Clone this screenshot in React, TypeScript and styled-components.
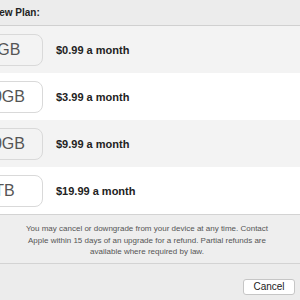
import React from "react";
import styled, { createGlobalStyle } from "styled-components";

const Global = createGlobalStyle`
  html, body { margin: 0; padding: 0; overflow: hidden; }
  body { font-family: "Liberation Sans", Arial, sans-serif; background: #ececec; }
`;

const Frame = styled.div`
  width: 300px;
  height: 300px;
  overflow: hidden;
  background: #ececec;
`;

const Sheet = styled.div`
  width: 360px;
  margin-left: -60px;
  display: flex;
  flex-direction: column;
`;

const Header = styled.div`
  height: 25px;
  display: flex;
  align-items: center;
  padding-left: 52px;
  border-bottom: 1px solid #d0d0d0;
  background: #ececec;
  font-size: 10px;
  font-weight: bold;
  color: #222;
`;

const Row = styled.div<{ $alt: boolean }>`
  height: 47px;
  display: flex;
  align-items: center;
  gap: 13px;
  padding-left: 17px;
  background: ${(p) => (p.$alt ? "#ffffff" : "#f3f3f3")};
`;

const SizeBox = styled.div`
  box-sizing: border-box;
  width: 86px;
  height: 32px;
  border: 1px solid #d9d9d9;
  border-radius: 8px;
  display: flex;
  align-items: center;
  justify-content: center;
  font-size: 16px;
  color: #555;
`;

const Price = styled.div`
  font-size: 11px;
  font-weight: bold;
  color: #222;
`;

const Footer = styled.div`
  height: 50px;
  box-sizing: border-box;
  border-top: 1px solid #d3d3d3;
  border-bottom: 1px solid #d3d3d3;
  background: #eeeeee;
  display: flex;
  align-items: center;
  padding: 3px 28px 0 82px;
`;

const Note = styled.p`
  margin: 0;
  width: 250px;
  text-align: center;
  white-space: nowrap;
  font-size: 8px;
  line-height: 11.5px;
  color: #555;
`;

const Bottom = styled.div`
  height: 35px;
  display: flex;
  align-items: flex-start;
  justify-content: flex-end;
  padding: 15px 5px 0 0;
  box-sizing: border-box;
  background: #ececec;
`;

const Button = styled.button`
  width: 52px;
  height: 16px;
  padding: 0;
  background: #fff;
  border: 1px solid #c6c6c6;
  border-radius: 3px;
  font-family: "Liberation Sans", Arial, sans-serif;
  font-size: 10px;
  color: #222;
  line-height: 14px;
`;

const plans = [
  { size: "20GB", price: "$0.99 a month" },
  { size: "200GB", price: "$3.99 a month" },
  { size: "500GB", price: "$9.99 a month" },
  { size: "1TB", price: "$19.99 a month" },
];

export default function App() {
  return (
    <Frame>
      <Global />
      <Sheet>
        <Header>New Plan:</Header>
        {plans.map((p, i) => (
          <Row key={p.size} $alt={i % 2 === 1}>
            <SizeBox>{p.size}</SizeBox>
            <Price>{p.price}</Price>
          </Row>
        ))}
        <Footer>
          <Note>
            You may cancel or downgrade from your device at any time. Contact
            <br />
            Apple within 15 days of an upgrade for a refund. Partial refunds are
            <br />
            available where required by law.
          </Note>
        </Footer>
        <Bottom>
          <Button>Cancel</Button>
        </Bottom>
      </Sheet>
    </Frame>
  );
}
